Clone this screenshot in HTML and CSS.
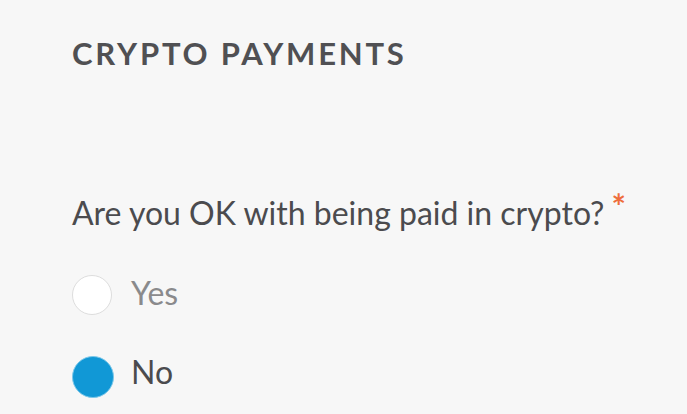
FILE: index.html
```html
<!DOCTYPE html>
<html>
<head>
<meta charset="utf-8">
<link rel="stylesheet" href="styles.css">
</head>
<body>
<section class="form">
  <h2 class="section-title">CRYPTO PAYMENTS</h2>
  <div class="question">Are you OK with being paid in crypto?<span class="req">*</span></div>
  <div class="options">
    <label class="option">
      <span class="radio"></span>
      <span class="opt-label muted">Yes</span>
    </label>
    <label class="option option-checked">
      <span class="radio checked"></span>
      <span class="opt-label">No</span>
    </label>
  </div>
</section>
</body>
</html>
```
FILE: styles.css
```css
html, body {
  margin: 0;
  padding: 0;
  background: #f7f7f7;
}
body {
  width: 687px;
  height: 414px;
  overflow: hidden;
  font-family: Lato, "Open Sans", sans-serif;
  color: #4b4b4e;
}
.form {
  padding: 33px 0 0 72px;
}
.section-title {
  margin: 0;
  font-size: 31px;
  font-weight: 700;
  letter-spacing: 2.8px;
  line-height: 40px;
  color: #505053;
}
.question {
  margin-top: 120px;
  font-size: 32px;
  line-height: 40px;
  color: #4b4b4e;
}
.req {
  color: #ee6d3c;
  font-size: 34px;
  font-weight: 700;
  margin-left: 7px;
  vertical-align: 6px;
  line-height: 0;
}
.options {
  margin-top: 40px;
  display: flex;
  flex-direction: column;
  gap: 37px;
}
.option {
  display: flex;
  align-items: flex-start;
  gap: 19px;
}
.option-checked {
  gap: 17px;
}
.radio {
  flex: none;
  width: 40px;
  height: 40px;
  margin-top: 2px;
  border-radius: 50%;
  background: #fff;
  border: 1.5px solid #dddddd;
  box-sizing: border-box;
}
.radio.checked {
  background: #1198d6;
  border: 1px solid #7cc8ea;
  width: 42px;
  height: 42px;
  margin-top: 4px;
}
.opt-label {
  font-size: 32px;
  line-height: 40px;
  color: #4b4b4e;
}
.opt-label.muted {
  color: #8a8a8c;
}
```
